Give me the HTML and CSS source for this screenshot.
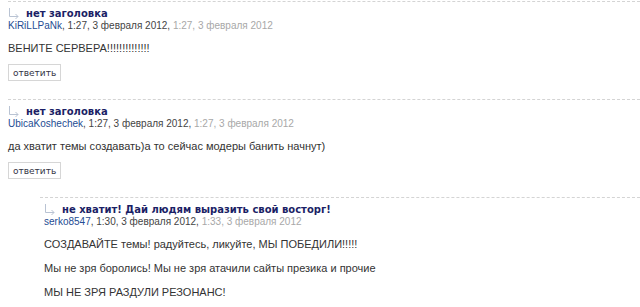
FILE: index.html
```html
<!DOCTYPE html>
<html lang="ru">
<head>
    <meta charset="UTF-8">
    <title>Комментарии</title>
    <link rel="stylesheet" href="styles.css">
</head>
<body>
    <div class="comments">
        <div class="comment">
            <div class="comment-head">
                <svg class="arrow" width="12" height="11" viewBox="0 0 12 11"><path d="M1.5 0V8.5H10M7.5 6L10 8.5L7.5 11" fill="none" stroke="#b9c3d3" stroke-width="1"/></svg>
                <span class="title">нет заголовка</span>
            </div>
            <div class="meta"><a class="author" href="#">KiRiLLPaNk</a>, 1:27, 3 февраля 2012, <span class="edited">1:27, 3 февраля 2012</span></div>
            <div class="text">
                <p>ВЕНИТЕ СЕРВЕРА!!!!!!!!!!!!!!</p>
            </div>
            <button class="reply">ответить</button>
        </div>

        <div class="comment">
            <div class="comment-head">
                <svg class="arrow" width="12" height="11" viewBox="0 0 12 11"><path d="M1.5 0V8.5H10M7.5 6L10 8.5L7.5 11" fill="none" stroke="#b9c3d3" stroke-width="1"/></svg>
                <span class="title">нет заголовка</span>
            </div>
            <div class="meta"><a class="author" href="#">UbicaKoshechek</a>, 1:27, 3 февраля 2012, <span class="edited">1:27, 3 февраля 2012</span></div>
            <div class="text">
                <p>да хватит темы создавать)а то сейчас модеры банить начнут)</p>
            </div>
            <button class="reply">ответить</button>
        </div>

        <div class="comment nested">
            <div class="comment-head">
                <svg class="arrow" width="12" height="11" viewBox="0 0 12 11"><path d="M1.5 0V8.5H10M7.5 6L10 8.5L7.5 11" fill="none" stroke="#b9c3d3" stroke-width="1"/></svg>
                <span class="title">не хватит! Дай людям выразить свой восторг!</span>
            </div>
            <div class="meta"><a class="author" href="#">serko8547</a>, 1:30, 3 февраля 2012, <span class="edited">1:33, 3 февраля 2012</span></div>
            <div class="text">
                <p>СОЗДАВАЙТЕ темы! радуйтесь, ликуйте, МЫ ПОБЕДИЛИ!!!!!</p>
                <p>Мы не зря боролись! Мы не зря атачили сайты презика и прочие</p>
                <p>МЫ НЕ ЗРЯ РАЗДУЛИ РЕЗОНАНС!</p>
                <p>...</p>
            </div>
        </div>
    </div>
</body>
</html>
```

FILE: styles.css
```css
body {
    margin: 0;
    background-color: #ffffff;
    font-family: "Liberation Sans", Arial, sans-serif;
    font-size: 11px;
    color: #333333;
    overflow: hidden;
}
.comments {
    padding-top: 1px;
    padding-left: 8px;
}
.comment {
    border-top: 1px dashed #d4d4d4;
    padding-top: 4px;
    padding-bottom: 18px;
}
.comment.nested {
    margin-left: 32px;
    padding-left: 4px;
}
.comment-head {
    display: flex;
    align-items: center;
    gap: 6px;
    height: 14px;
}
.arrow {
    display: block;
    margin-top: 1px;
}
.title {
    font-family: "DejaVu Sans", Verdana, sans-serif;
    font-weight: bold;
    font-size: 10px;
    color: #1b1f66;
}
.meta {
    font-size: 10px;
    line-height: 12px;
    color: #444444;
}
.author {
    color: #244c93;
    text-decoration: none;
}
.edited {
    color: #a8a8a8;
}
.text p {
    margin: 9px 0 0;
    line-height: 14px;
}
.text p + p {
    margin-top: 10px;
}
.reply {
    display: block;
    margin-top: 9px;
    height: 17px;
    padding: 0 4px;
    font-family: "DejaVu Sans", Verdana, sans-serif;
    font-size: 9px;
    color: #333344;
    background-color: #ffffff;
    border: 1px solid #d6d6d6;
    cursor: pointer;
}
```
